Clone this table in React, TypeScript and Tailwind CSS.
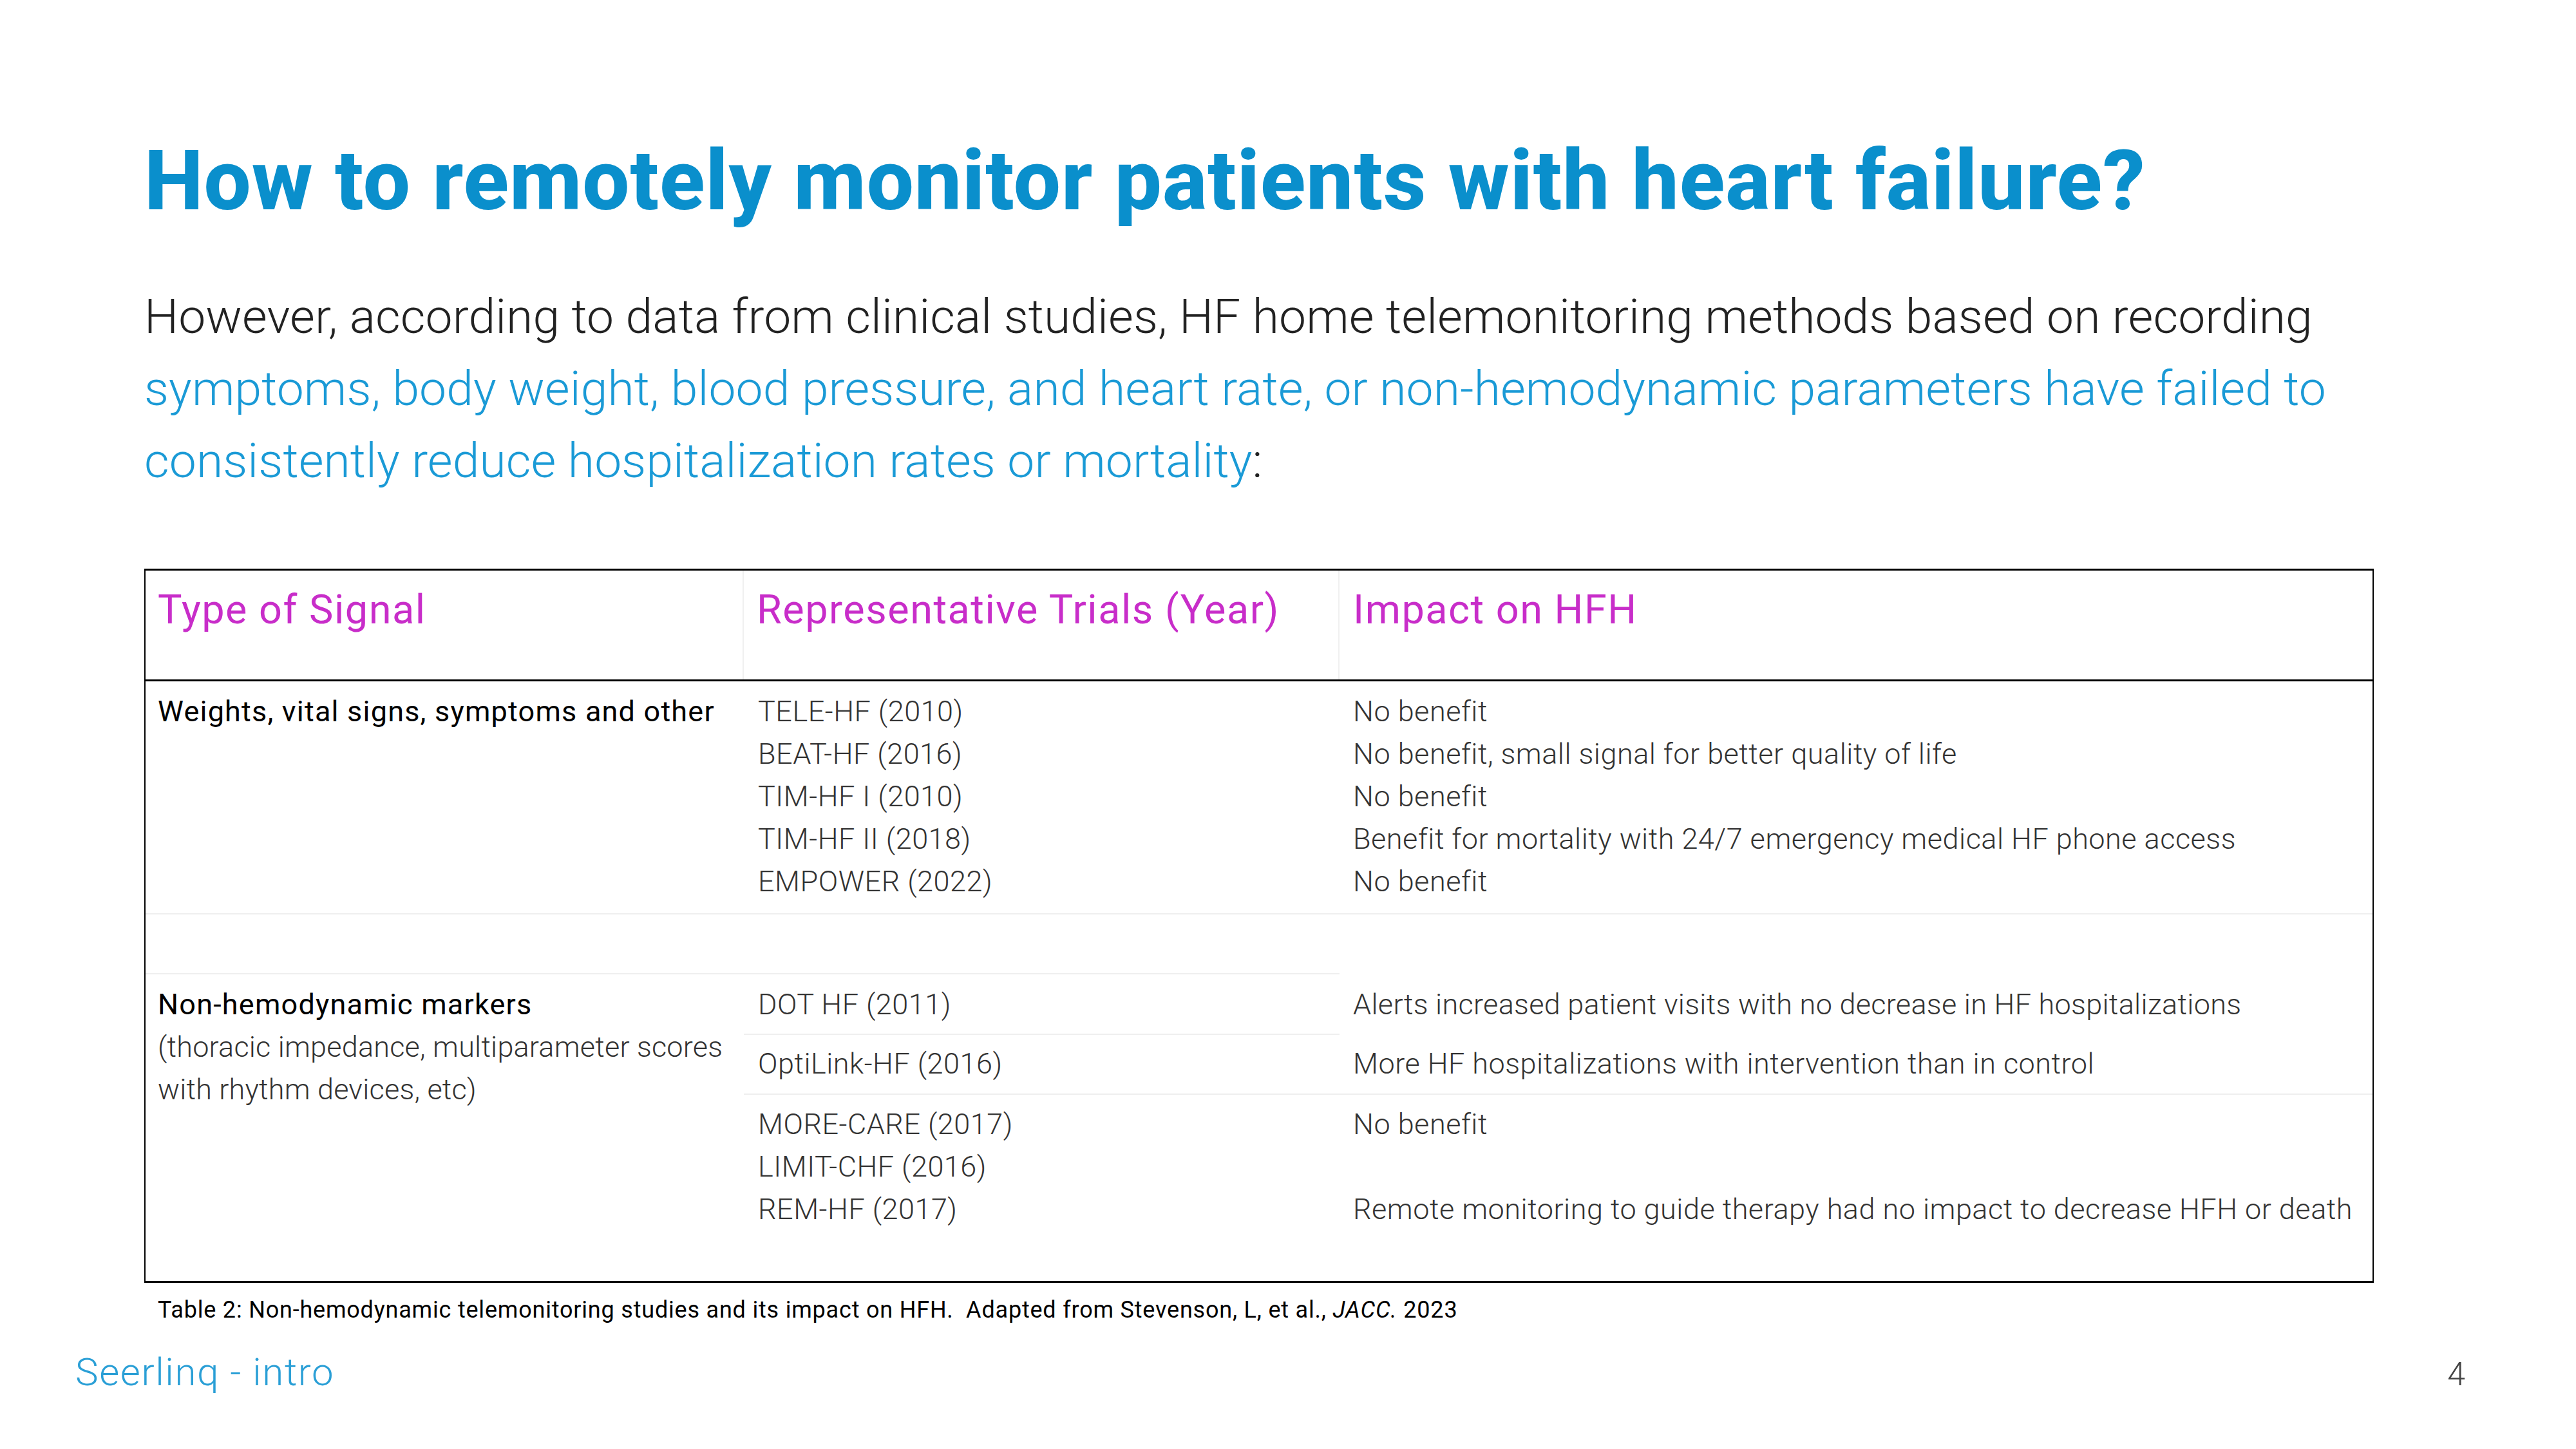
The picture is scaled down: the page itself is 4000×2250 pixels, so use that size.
export default function App() {
  return (
    <div className="w-[4000px] h-[2250px] bg-white font-['Roboto',sans-serif] flex flex-col">
      {/* Main content */}
      <div className="pl-[224px] pr-[314px] pt-[216px]">
        <h1 className="text-[130px] leading-[130px] font-extrabold text-[#0a8fcc] tracking-[1px] whitespace-nowrap">
          How to remotely monitor patients with heart failure?
        </h1>

        <p className="mt-[89px] text-[75px] leading-[112px] font-light text-[#222] tracking-[0.1px] whitespace-nowrap">
          However, according to data from clinical studies, HF home telemonitoring methods based on recording
          <br />
          <span className="text-[#1a9ad6]">
            symptoms, body weight, blood pressure, and heart rate, or non-hemodynamic parameters have failed to
            <br />
            consistently reduce hospitalization rates or mortality
          </span>
          :
        </p>

        {/* Table */}
        <div className="mt-[112px] w-[3462px] border-t-[3px] border-b-[3px] border-x-2 border-black">
          {/* Header */}
          <div className="flex h-[172px] border-b-[3px] border-black text-[63px] leading-[80px] tracking-[1.5px] text-[#c82dc9]">
            <div className="w-[929px] pl-[19px] pt-[21px] border-r-2 border-[#f0f0f0]">Type of Signal</div>
            <div className="w-[925px] pl-[20px] pt-[21px] border-r-2 border-[#f0f0f0]">Representative Trials (Year)</div>
            <div className="flex-1 pl-[21px] pt-[21px]">Impact on HFH</div>
          </div>

          {/* Weights, vital signs... */}
          <div className="flex h-[362px] border-b-2 border-[#efefef] text-[45px] leading-[66px]">
            <div className="w-[929px] pl-[19px] pt-[14px] text-black tracking-[1.2px]">
              Weights, vital signs, symptoms and other
            </div>
            <div className="w-[925px] pl-[22px] pt-[14px] font-light text-[#333] tracking-[0.5px]">
              <div>TELE-HF (2010)</div>
              <div>BEAT-HF (2016)</div>
              <div>TIM-HF I (2010)</div>
              <div>TIM-HF II (2018)</div>
              <div>EMPOWER (2022)</div>
            </div>
            <div className="flex-1 pl-[21px] pt-[14px] font-light text-[#333] tracking-[0.5px]">
              <div>No benefit</div>
              <div>No benefit, small signal for better quality of life</div>
              <div>No benefit</div>
              <div>Benefit for mortality with 24/7 emergency medical HF phone access</div>
              <div>No benefit</div>
            </div>
          </div>

          {/* Non-hemodynamic markers */}
          <div className="grid grid-cols-[929px_925px_1fr] grid-rows-[93px_94px_93px_289px] text-[45px] leading-[66px]">
            <div className="col-span-2 border-b-2 border-[#efefef]" />
            <div className="row-span-2 pl-[21px] pt-[107px] font-light text-[#333] tracking-[0.3px]">
              Alerts increased patient visits with no decrease in HF hospitalizations
            </div>
            <div className="row-span-3 pl-[19px] pt-[14px]">
              <div className="text-black tracking-[1.2px]">Non-hemodynamic markers</div>
              <div className="font-light text-[#333] tracking-[0.2px] whitespace-nowrap">
                (thoracic impedance, multiparameter scores
              </div>
              <div className="font-light text-[#333] tracking-[0.2px]">with rhythm devices, etc)</div>
            </div>
            <div className="pl-[22px] pt-[14px] font-light text-[#333] tracking-[0.5px] border-b-2 border-[#efefef]">
              DOT HF (2011)
            </div>
            <div className="col-span-2 grid grid-cols-[925px_1fr] border-b-2 border-[#efefef] font-light text-[#333] tracking-[0.5px]">
              <div className="pl-[22px] pt-[12px]">OptiLink-HF (2016)</div>
              <div className="pl-[21px] pt-[12px]">More HF hospitalizations with intervention than in control</div>
            </div>
            <div className="col-span-2 grid grid-cols-[925px_1fr] font-light text-[#333] tracking-[0.5px]">
              <div className="pl-[22px] pt-[13px]">
                <div>MORE-CARE (2017)</div>
                <div>LIMIT-CHF (2016)</div>
                <div>REM-HF (2017)</div>
              </div>
              <div className="pl-[21px] pt-[13px]">
                <div>No benefit</div>
                <div>&nbsp;</div>
                <div>Remote monitoring to guide therapy had no impact to decrease HFH or death</div>
              </div>
            </div>
          </div>
        </div>

        <p className="mt-[22px] pl-[21px] text-[36px] leading-[40px] tracking-[0.8px] text-black whitespace-nowrap">
          Table 2: Non-hemodynamic telemonitoring studies and its impact on HFH.&nbsp; Adapted from Stevenson, L, et al.,{' '}
          <i>JACC.</i> 2023
        </p>
      </div>

      {/* Footer */}
      <div className="mt-[42px] flex items-baseline justify-between pl-[117px] pr-[172px]">
        <span className="text-[60px] leading-[70px] font-light tracking-[1.6px] text-[#2a9fd6]">Seerlinq - intro</span>
        <span className="text-[50px] leading-[70px] font-light text-[#444]">4</span>
      </div>
    </div>
  );
}
